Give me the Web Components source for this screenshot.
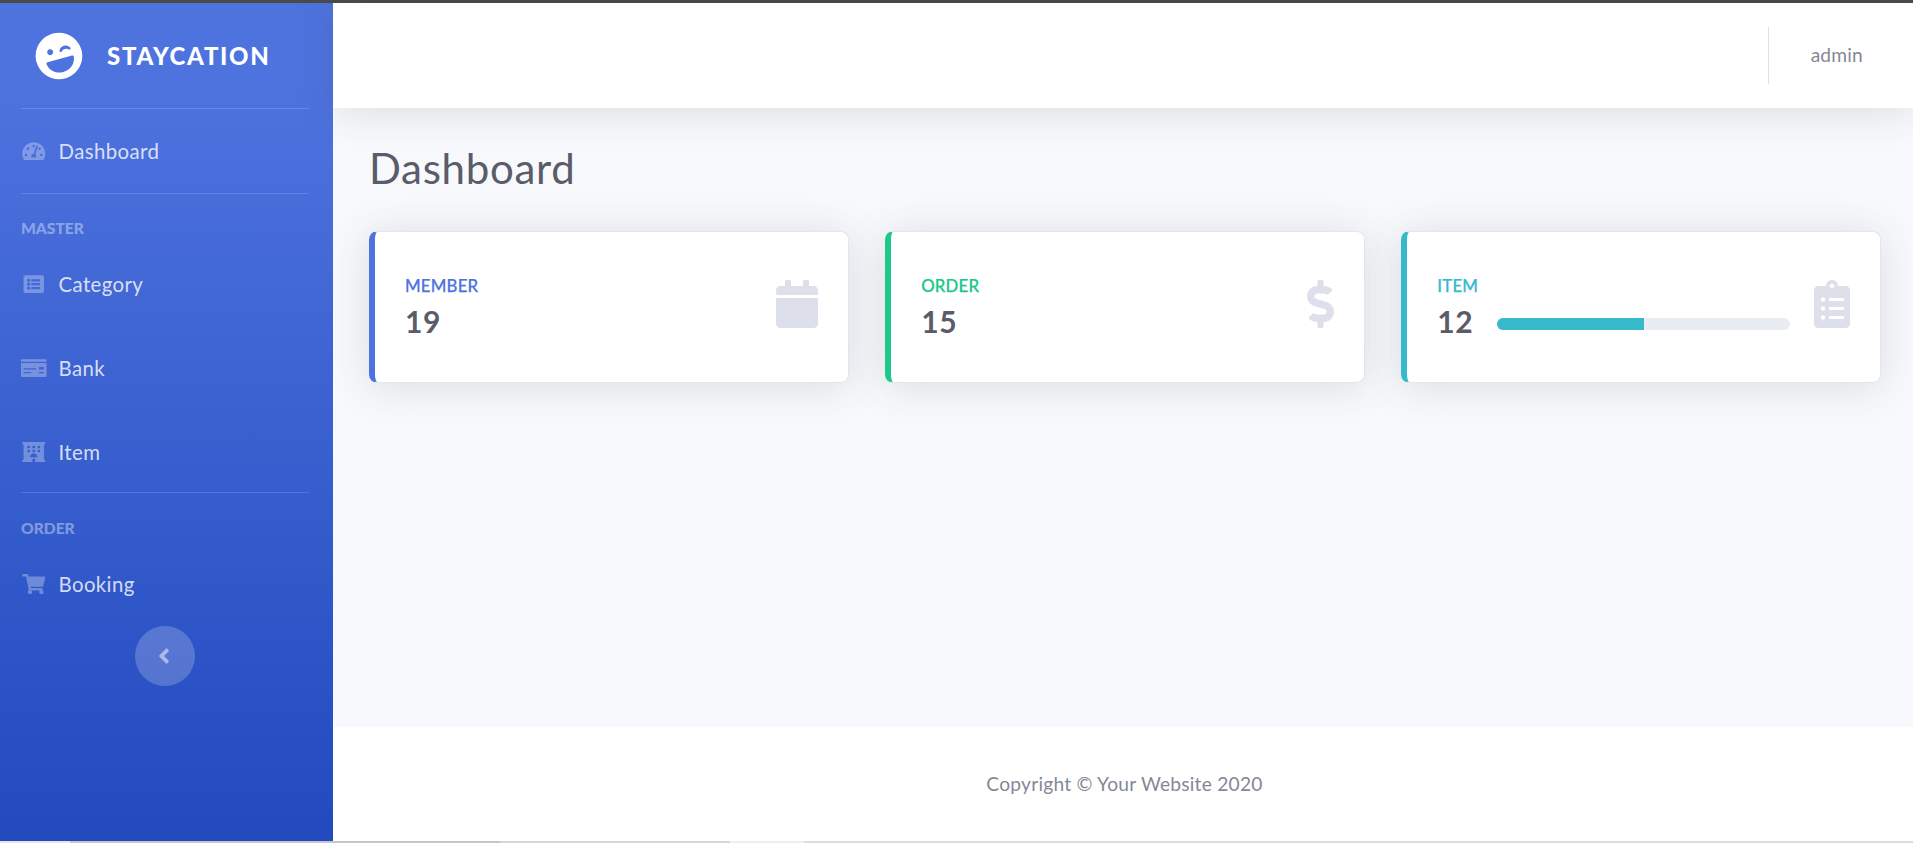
<!DOCTYPE html>
<html lang="en">
<head>
<meta charset="utf-8">
<title>Staycation</title>
<style>
  html, body { margin: 0; height: 100%; overflow: hidden; background: #fff; }
  body { font-family: "Lato", "Liberation Sans", sans-serif; }
</style>
</head>
<body>
<app-shell>
  <side-bar slot="side">
    <nav-link icon="gauge" slot="top">Dashboard</nav-link>
    <nav-head slot="master">Master</nav-head>
    <nav-link icon="list" slot="master">Category</nav-link>
    <nav-link icon="bank" slot="master">Bank</nav-link>
    <nav-link icon="hotel" slot="master">Item</nav-link>
    <nav-head slot="order">Order</nav-head>
    <nav-link icon="cart" slot="order">Booking</nav-link>
  </side-bar>
  <top-bar slot="top">admin</top-bar>
  <dash-board slot="main">
    <stat-card label="Member" value="19" icon="calendar" tone="#4e73df"></stat-card>
    <stat-card label="Order" value="15" icon="dollar" tone="#1cc88a"></stat-card>
    <stat-card label="Item" value="12" icon="clipboard" tone="#36b9cc" progress="50"></stat-card>
  </dash-board>
  <page-footer slot="foot">Copyright © Your Website 2020</page-footer>
</app-shell>

<script>
const ICONS = {
  gauge: ["0 0 576 512", "M288 32C128.94 32 0 160.94 0 320c0 52.8 14.25 102.26 39.06 144.8 5.61 9.62 16.3 15.2 27.44 15.2h443c11.14 0 21.83-5.58 27.44-15.2C561.75 422.26 576 372.8 576 320c0-159.06-128.94-288-288-288zm0 64c14.71 0 26.58 10.13 30.32 23.65-1.11 2.26-2.64 4.23-3.45 6.67l-9.22 27.67c-5.13 3.49-10.97 6.01-17.64 6.01-17.67 0-32-14.33-32-32S270.33 96 288 96zM96 384c-17.67 0-32-14.33-32-32s14.33-32 32-32 32 14.33 32 32-14.33 32-32 32zm48-160c-17.67 0-32-14.33-32-32s14.33-32 32-32 32 14.33 32 32-14.33 32-32 32zm246.77-72.41l-61.33 184C343.13 347.33 352 364.54 352 384c0 11.72-3.38 22.55-8.88 32H232.88c-5.5-9.45-8.88-20.28-8.88-32 0-33.94 26.5-61.43 59.9-63.59l61.34-184.01c4.17-12.56 17.73-19.45 30.36-15.17 12.57 4.19 19.35 17.79 15.17 30.36zm14.66 57.2l15.52-46.55c3.47-1.29 7.13-2.23 11.05-2.23 17.67 0 32 14.33 32 32s-14.33 32-32 32c-11.38-.01-20.89-6.28-26.57-15.22zM480 384c-17.67 0-32-14.33-32-32s14.33-32 32-32 32 14.33 32 32-14.33 32-32 32z"],
  list: ["0 0 512 512", "M464 480H48c-26.51 0-48-21.49-48-48V80c0-26.51 21.49-48 48-48h416c26.51 0 48 21.49 48 48v352c0 26.51-21.49 48-48 48zM128 120c-22.091 0-40 17.909-40 40s17.909 40 40 40 40-17.909 40-40-17.909-40-40-40zm0 96c-22.091 0-40 17.909-40 40s17.909 40 40 40 40-17.909 40-40-17.909-40-40-40zm0 96c-22.091 0-40 17.909-40 40s17.909 40 40 40 40-17.909 40-40-17.909-40-40-40zm288-136v-32c0-6.627-5.373-12-12-12H204c-6.627 0-12 5.373-12 12v32c0 6.627 5.373 12 12 12h200c6.627 0 12-5.373 12-12zm0 96v-32c0-6.627-5.373-12-12-12H204c-6.627 0-12 5.373-12 12v32c0 6.627 5.373 12 12 12h200c6.627 0 12-5.373 12-12zm0 96v-32c0-6.627-5.373-12-12-12H204c-6.627 0-12 5.373-12 12v32c0 6.627 5.373 12 12 12h200c6.627 0 12-5.373 12-12z"],
  bank: ["0 0 640 512", "M0 448c0 17.67 14.33 32 32 32h576c17.67 0 32-14.33 32-32V128H0v320zm448-208c0-8.84 7.16-16 16-16h96c8.84 0 16 7.16 16 16v32c0 8.84-7.16 16-16 16h-96c-8.84 0-16-7.16-16-16v-32zm0 120c0-4.42 3.58-8 8-8h112c4.42 0 8 3.58 8 8v16c0 4.42-3.58 8-8 8H456c-4.42 0-8-3.58-8-8v-16zM64 264c0-4.42 3.58-8 8-8h304c4.42 0 8 3.58 8 8v16c0 4.42-3.58 8-8 8H72c-4.42 0-8-3.58-8-8v-16zm0 96c0-4.42 3.58-8 8-8h176c4.42 0 8 3.58 8 8v16c0 4.42-3.58 8-8 8H72c-4.42 0-8-3.58-8-8v-16zM624 32H16C7.16 32 0 39.16 0 48v48h640V48c0-8.84-7.16-16-16-16z"],
  hotel: ["0 0 576 512", "M560 64c8.84 0 16-7.16 16-16V16c0-8.84-7.16-16-16-16H16C7.16 0 0 7.16 0 16v32c0 8.84 7.16 16 16 16h15.98v384H16c-8.84 0-16 7.16-16 16v32c0 8.84 7.16 16 16 16h240v-80c0-8.8 7.2-16 16-16h32c8.8 0 16 7.2 16 16v80h240c8.84 0 16-7.16 16-16v-32c0-8.84-7.16-16-16-16h-16V64h16zm-304 44.8c0-6.4 6.4-12.8 12.8-12.8h38.4c6.4 0 12.8 6.4 12.8 12.8v38.4c0 6.4-6.4 12.8-12.8 12.8h-38.4c-6.4 0-12.8-6.4-12.8-12.8v-38.4zm0 96c0-6.4 6.4-12.8 12.8-12.8h38.4c6.4 0 12.8 6.4 12.8 12.8v38.4c0 6.4-6.4 12.8-12.8 12.8h-38.4c-6.4 0-12.8-6.4-12.8-12.8v-38.4zm-128-96c0-6.4 6.4-12.8 12.8-12.8h38.4c6.4 0 12.8 6.4 12.8 12.8v38.4c0 6.4-6.4 12.8-12.8 12.8h-38.4c-6.4 0-12.8-6.4-12.8-12.8v-38.4zM179.2 256h-38.4c-6.4 0-12.8-6.4-12.8-12.8v-38.4c0-6.4 6.4-12.8 12.8-12.8h38.4c6.4 0 12.8 6.4 12.8 12.8v38.4c0 6.4-6.4 12.8-12.8 12.8zM192 384c0-53.02 42.98-96 96-96s96 42.98 96 96H192zm256-140.8c0 6.4-6.4 12.8-12.8 12.8h-38.4c-6.4 0-12.8-6.4-12.8-12.8v-38.4c0-6.4 6.4-12.8 12.8-12.8h38.4c6.4 0 12.8 6.4 12.8 12.8v38.4zm0-96c0 6.4-6.4 12.8-12.8 12.8h-38.4c-6.4 0-12.8-6.4-12.8-12.8v-38.4c0-6.4 6.4-12.8 12.8-12.8h38.4c6.4 0 12.8 6.4 12.8 12.8v38.4z"],
  cart: ["0 0 576 512", "M528.12 301.319l47.273-208C578.806 78.301 567.391 64 551.99 64H159.208l-9.166-44.81C147.758 8.021 137.93 0 126.529 0H24C10.745 0 0 10.745 0 24v16c0 13.255 10.745 24 24 24h69.883l70.248 343.435C147.325 417.1 136 435.222 136 456c0 30.928 25.072 56 56 56s56-25.072 56-56c0-15.674-6.447-29.835-16.824-40h209.647C430.447 426.165 424 440.326 424 456c0 30.928 25.072 56 56 56s56-25.072 56-56c0-22.172-12.888-41.332-31.579-50.405l5.517-24.276c3.413-15.018-8.002-29.319-23.403-29.319H218.117l-6.545-32h293.145c11.206 0 20.92-7.754 23.403-18.681z"],
  angle: ["0 0 256 512", "M31.7 239l136-136c9.4-9.4 24.6-9.4 33.9 0l22.6 22.6c9.4 9.4 9.4 24.6 0 33.9L127.9 256l96.4 96.4c9.4 9.4 9.4 24.6 0 33.9L201.7 409c-9.4 9.4-24.6 9.4-33.9 0l-136-136c-9.5-9.4-9.5-24.6-.1-34z"],
  wink: ["0 0 496 512", "M248 8C111 8 0 119 0 256s111 248 248 248 248-111 248-248S385 8 248 8zm20.1 198.1c4-25.2 34.2-42.1 59.9-42.1s55.9 16.9 59.9 42.1c1.7 11.1-11.4 18.3-19.8 10.8l-9.5-8.5c-14.8-13.2-46.2-13.2-61 0L288 217c-8.4 7.4-21.6.3-19.9-10.9zM168 160c17.7 0 32 14.3 32 32s-14.3 32-32 32-32-14.3-32-32 14.3-32 32-32zm230.9 146C390 377 329.4 432 256 432h-16c-73.4 0-134-55-142.9-126-1.2-9.5 6.3-18 15.9-18h270c9.6 0 17.1 8.4 15.9 18z"],
  calendar: ["0 0 448 512", "M12 192h424c6.6 0 12 5.4 12 12v260c0 26.5-21.5 48-48 48H48c-26.5 0-48-21.5-48-48V204c0-6.6 5.4-12 12-12zm436-44v-36c0-26.5-21.5-48-48-48h-48V12c0-6.6-5.4-12-12-12h-40c-6.6 0-12 5.4-12 12v52H160V12c0-6.6-5.4-12-12-12h-40c-6.6 0-12 5.4-12 12v52H48C21.5 64 0 85.5 0 112v36c0 6.6 5.4 12 12 12h424c6.6 0 12-5.4 12-12z"],
  dollar: ["0 0 288 512", "M209.2 233.4l-108-31.6C88.7 198.2 80 186.5 80 173.5c0-16.3 13.2-29.5 29.5-29.5h66.3c12.2 0 24.2 3.7 34.2 10.5 6.1 4.1 14.3 3.1 19.5-2l34.8-34c7.1-6.9 6.1-18.4-1.8-24.5C238 74.8 207.4 64.1 176 64V16c0-8.8-7.2-16-16-16h-32c-8.8 0-16 7.2-16 16v48h-2.5C45.8 64-5.4 118.7.5 183.6c4.2 46.1 39.4 83.6 83.8 96.6l102.5 30c12.5 3.7 21.2 15.3 21.2 28.3 0 16.3-13.2 29.5-29.5 29.5h-66.3C100 368 88 364.3 78 357.5c-6.1-4.1-14.3-3.1-19.5 2l-34.8 34c-7.1 6.9-6.1 18.4 1.8 24.5 24.5 19.2 55.1 29.9 86.5 30v48c0 8.8 7.2 16 16 16h32c8.8 0 16-7.2 16-16v-48.2c46.6-.9 90.3-28.6 105.7-72.7 21.5-61.6-14.6-124.8-72.5-141.7z"],
  clipboard: ["0 0 384 512", "M336 64h-80c0-35.3-28.7-64-64-64s-64 28.7-64 64H48C21.5 64 0 85.5 0 112v352c0 26.5 21.5 48 48 48h288c26.5 0 48-21.5 48-48V112c0-26.5-21.5-48-48-48zM96 424c-13.3 0-24-10.7-24-24s10.7-24 24-24 24 10.7 24 24-10.7 24-24 24zm0-96c-13.3 0-24-10.7-24-24s10.7-24 24-24 24 10.7 24 24-10.7 24-24 24zm0-96c-13.3 0-24-10.7-24-24s10.7-24 24-24 24 10.7 24 24-10.7 24-24 24zm96-192c13.3 0 24 10.7 24 24s-10.7 24-24 24-24-10.7-24-24 10.7-24 24-24zm128 368c0 4.4-3.6 8-8 8H168c-4.4 0-8-3.6-8-8v-16c0-4.4 3.6-8 8-8h144c4.4 0 8 3.6 8 8v16zm0-96c0 4.4-3.6 8-8 8H168c-4.4 0-8-3.6-8-8v-16c0-4.4 3.6-8 8-8h144c4.4 0 8 3.6 8 8v16zm0-96c0 4.4-3.6 8-8 8H168c-4.4 0-8-3.6-8-8v-16c0-4.4 3.6-8 8-8h144c4.4 0 8 3.6 8 8v16z"]
};

function svgIcon(name) {
  const [box, d] = ICONS[name];
  return `<svg viewBox="${box}" fill="currentColor" aria-hidden="true"><path d="${d}"/></svg>`;
}

class AppShell extends HTMLElement {
  constructor() {
    super();
    this.attachShadow({ mode: "open" });
    this.shadowRoot.innerHTML = `
      <style>
        :host { display: flex; flex-direction: column; height: 843px; background: #fff; }
        .strip { height: 3px; background: #4a4a4a; flex: none; }
        .frame { display: flex; height: 838px; }
        .col { flex: 1; min-width: 0; display: flex; flex-direction: column; }
        .bottom {
          height: 2px;
          flex: none;
          background: linear-gradient(90deg,
            #e6e6e6 0 70px, #c6c6c6 70px 500px, #d6d6d6 500px 730px,
            #efefef 730px 804px, #dcdcdc 804px 100%);
        }
      </style>
      <div class="strip"></div>
      <div class="frame">
        <slot name="side"></slot>
        <div class="col">
          <slot name="top"></slot>
          <slot name="main"></slot>
          <slot name="foot"></slot>
        </div>
      </div>
      <div class="bottom"></div>
    `;
  }
}

class SideBar extends HTMLElement {
  constructor() {
    super();
    this.attachShadow({ mode: "open" });
    this.shadowRoot.innerHTML = `
      <style>
        :host {
          display: flex;
          flex-direction: column;
          width: 333px;
          flex: none;
          background: linear-gradient(180deg, #4e73df 10%, #224abe 100%);
        }
        .brand {
          height: 105px;
          display: flex;
          align-items: center;
          gap: 24px;
          padding: 0 0 0 35px;
          box-sizing: border-box;
          color: #fff;
          font-weight: 900;
          font-size: 24px;
          letter-spacing: 1.7px;
        }
        .brand svg { width: 48px; height: 48px; transform: rotate(-15deg); }
        hr { margin: 0 24px 0 21px; border: 0; height: 1px; background: rgba(255,255,255,.15); flex: none; }
        hr.tight { margin-top: -2px; margin-bottom: 1px; }
        .toggle {
          align-self: flex-start;
          margin: 0 0 0 135px;
          width: 60px;
          height: 60px;
          border-radius: 50%;
          background: rgba(255,255,255,.2);
          color: rgba(255,255,255,.5);
          display: flex;
          align-items: center;
          justify-content: center;
        }
        .toggle svg { width: 12px; height: 24px; margin-right: 2px; }
      </style>
      <div class="brand">${svgIcon("wink")}<span>STAYCATION</span></div>
      <hr>
      <slot name="top"></slot>
      <hr>
      <slot name="master"></slot>
      <hr class="tight">
      <slot name="order"></slot>
      <div class="toggle">${svgIcon("angle")}</div>
    `;
  }
}

class NavLink extends HTMLElement {
  constructor() {
    super();
    this.attachShadow({ mode: "open" });
    this.shadowRoot.innerHTML = `
      <style>
        :host {
          display: flex;
          align-items: center;
          height: 84px;
          padding-left: 21px;
          color: rgba(255,255,255,.8);
          font-size: 20.4px;
          letter-spacing: .4px;
        }
        .ic { width: 25.5px; height: 20.4px; margin-right: 12px; color: rgba(255,255,255,.3); flex: none; display: flex; }
        svg { width: 100%; height: 100%; }
      </style>
      <span class="ic">${svgIcon(this.getAttribute("icon"))}</span><slot></slot>
    `;
  }
}

class NavHead extends HTMLElement {
  constructor() {
    super();
    this.attachShadow({ mode: "open" });
    this.shadowRoot.innerHTML = `
      <style>
        :host {
          display: block;
          box-sizing: border-box;
          height: 48px;
          padding: 22px 0 0 21px;
          font-size: 15.6px;
          line-height: 25px;
          font-weight: 900;
          text-transform: uppercase;
          color: rgba(255,255,255,.4);
        }
      </style>
      <slot></slot>
    `;
  }
}

class TopBar extends HTMLElement {
  constructor() {
    super();
    this.attachShadow({ mode: "open" });
    this.shadowRoot.innerHTML = `
      <style>
        :host {
          display: flex;
          align-items: center;
          justify-content: flex-end;
          height: 105px;
          flex: none;
          position: relative;
          z-index: 1;
          background: #fff;
          box-shadow: 0 3.6px 42px rgba(58,59,69,.15);
          color: #858796;
          font-size: 19.2px;
          letter-spacing: .2px;
        }
        .sep { width: 1px; height: 57px; background: #dddfeb; margin-right: 42px; }
        .user { margin-right: 50px; padding-bottom: 2px; }
      </style>
      <div class="sep"></div>
      <div class="user"><slot></slot></div>
    `;
  }
}

class DashBoard extends HTMLElement {
  constructor() {
    super();
    this.attachShadow({ mode: "open" });
    this.shadowRoot.innerHTML = `
      <style>
        :host {
          display: block;
          box-sizing: border-box;
          flex: 1;
          background: #f8f9fc;
          padding: 29px 32px 0 36px;
        }
        h1 {
          margin: 0 0 31px;
          font-size: 42px;
          line-height: 63px;
          font-weight: 400;
          letter-spacing: .7px;
          color: #5a5c69;
        }
        .cards { display: grid; grid-template-columns: repeat(3, 1fr); column-gap: 36.5px; }
      </style>
      <h1>Dashboard</h1>
      <div class="cards"><slot></slot></div>
    `;
  }
}

class StatCard extends HTMLElement {
  constructor() {
    super();
    this.attachShadow({ mode: "open" });
    const progress = this.getAttribute("progress");
    const bar = progress
      ? `<div class="track"><div class="fill" style="width:${progress}%"></div></div>`
      : "";
    this.shadowRoot.innerHTML = `
      <style>
        :host {
          display: flex;
          align-items: center;
          box-sizing: border-box;
          height: 152px;
          padding: 0 29.5px 0 30px;
          background: #fff;
          border: 1.5px solid #e3e6f0;
          border-left: 6px solid ${this.getAttribute("tone")};
          border-radius: 8.4px;
          box-shadow: 0 3.6px 42px rgba(58,59,69,.15);
        }
        .body { flex: 1; min-width: 0; padding-top: 1px; }
        .label {
          font-size: 16.8px;
          line-height: 20px;
          font-weight: 500;
          letter-spacing: .2px;
          -webkit-text-stroke: .25px currentColor;
          text-transform: uppercase;
          color: ${this.getAttribute("tone")};
          margin-bottom: 7px;
        }
        .line { display: flex; align-items: center; }
        .value { font-size: 30px; line-height: 36px; font-weight: 700; letter-spacing: .6px; color: #5a5c69; margin-right: 24px; }
        .track { flex: 1; height: 12px; border-radius: 6px; background: #eaecf4; overflow: hidden; margin-top: 5px; margin-right: 24px; }
        .fill { height: 100%; background: #36b9cc; }
        .ic { color: #dddfeb; height: 48px; display: flex; margin-bottom: 6px; }
        svg { height: 48px; }
      </style>
      <div class="body">
        <div class="label">${this.getAttribute("label")}</div>
        <div class="line"><div class="value">${this.getAttribute("value")}</div>${bar}</div>
      </div>
      <div class="ic">${svgIcon(this.getAttribute("icon"))}</div>
    `;
  }
}

class PageFooter extends HTMLElement {
  constructor() {
    super();
    this.attachShadow({ mode: "open" });
    this.shadowRoot.innerHTML = `
      <style>
        :host {
          display: flex;
          align-items: center;
          justify-content: center;
          box-sizing: border-box;
          height: 114px;
          padding: 0 0 2px 3px;
          flex: none;
          background: #fff;
          color: #858796;
          font-size: 19.2px;
          letter-spacing: .23px;
        }
      </style>
      <slot></slot>
    `;
  }
}

customElements.define("app-shell", AppShell);
customElements.define("side-bar", SideBar);
customElements.define("nav-link", NavLink);
customElements.define("nav-head", NavHead);
customElements.define("top-bar", TopBar);
customElements.define("dash-board", DashBoard);
customElements.define("stat-card", StatCard);
customElements.define("page-footer", PageFooter);
</script>
</body>
</html>
